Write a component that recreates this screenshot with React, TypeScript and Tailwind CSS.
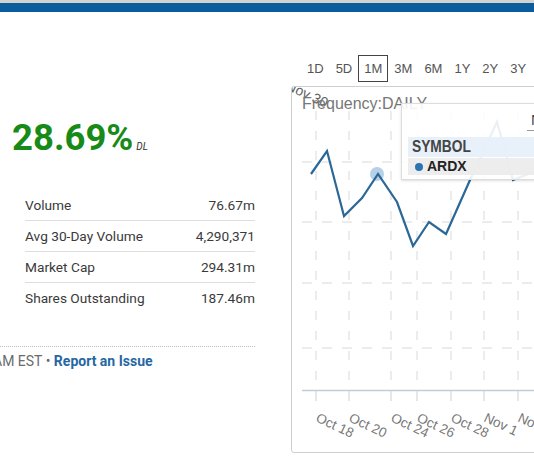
import React from "react";

const stats = [
  { label: "Volume", value: "76.67m" },
  { label: "Avg 30-Day Volume", value: "4,290,371" },
  { label: "Market Cap", value: "294.31m" },
  { label: "Shares Outstanding", value: "187.46m" },
];

const ranges = ["1D", "5D", "1M", "3M", "6M", "1Y", "2Y", "3Y"];

// x positions of the grid columns / ticks (page coordinates)
const ticks = [
  { x: 316, label: "Oct 18" },
  { x: 349, label: "Oct 20" },
  { x: 391, label: "Oct 24" },
  { x: 417, label: "Oct 26" },
  { x: 451, label: "Oct 28" },
  { x: 484, label: "Nov 1" },
  { x: 518, label: "Nov 3" },
  { x: 552, label: "Nov 7" },
];

const rows = [162, 222, 283, 348];

const points: [number, number][] = [
  [311, 174],
  [327, 151],
  [344, 216],
  [362, 198],
  [378, 174],
  [397, 202],
  [413, 246],
  [429, 222],
  [446, 234],
  [470, 180],
  [497, 122],
  [513, 180],
  [536, 171],
  [560, 160],
];

function PriceChart() {
  const path = points.map(([x, y], i) => `${i === 0 ? "M" : "L"}${x} ${y}`).join(" ");

  return (
    <svg
      className="absolute inset-0"
      width={298}
      height={365}
      viewBox="292 87 298 365"
      fontFamily="'Liberation Sans', Arial, sans-serif"
    >
      {/* previous label peeking in at the top */}
      <text x={285} y={89} fontSize={14} fill="#5f5f5f" transform="rotate(25 285 89)">
        Nov 30
      </text>

      {/* grid */}
      {ticks.map((t) => (
        <line key={t.x} x1={t.x} y1={111} x2={t.x} y2={390} stroke="#d9d9d9" strokeDasharray="9 11" />
      ))}
      {rows.map((y) => (
        <line key={y} x1={302} y1={y} x2={600} y2={y} stroke="#d9d9d9" strokeDasharray="10 10" />
      ))}

      {/* axis */}
      <line x1={302} y1={390.5} x2={600} y2={390.5} stroke="#c3ccd4" strokeWidth={1.5} />
      {ticks.map((t) => (
        <line key={t.x} x1={t.x} y1={391} x2={t.x} y2={401} stroke="#cfcfcf" />
      ))}
      {ticks.map((t) => (
        <text
          key={t.x}
          x={t.x - 1}
          y={421}
          fontSize={13.5}
          fill="#777"
          transform={`rotate(25 ${t.x - 1} 421)`}
        >
          {t.label}
        </text>
      ))}

      {/* series */}
      <circle cx={377} cy={174} r={7} fill="#b5d0e8" />
      <path d={path} fill="none" stroke="#2b6898" strokeWidth={2.2} strokeLinejoin="miter" />
    </svg>
  );
}

export default function App() {
  return (
    <div className="w-[534px] h-[462px] overflow-hidden bg-white">
      {/* Top bar */}
      <div className="h-[3px] bg-[#d2d2d2]" />
      <div className="h-[9px] bg-[#0b5c9d]" />

      <div className="flex">
        {/* Left column */}
        <div className="w-[256px] shrink-0 pt-[108px] font-['Roboto',sans-serif]">
          <div className="pl-[12px] h-[36px] leading-[36px] whitespace-nowrap">
            <span className="text-[36.5px] font-bold text-[#178a17]">28.69%</span>
            <span className="ml-[3px] text-[10px] italic text-[#333]">DL</span>
          </div>

          <div className="mt-[34px] ml-[25px] w-[230px]">
            {stats.map((s, i) => (
              <div
                key={s.label}
                className={
                  "h-[31px] flex items-center justify-between text-[13.7px] text-[#3a3a3a] " +
                  (i < stats.length - 1 ? "border-b border-[#dedede]" : "")
                }
              >
                <span>{s.label}</span>
                <span>{s.value}</span>
              </div>
            ))}
          </div>

          <div className="mt-[32px] w-[255px] border-t border-dotted border-[#bdbdbd]" />
          <div className="pt-[6px] -ml-[7px] text-[14px] leading-[16px] whitespace-nowrap">
            <span className="text-[#6b6b6b]">AM EST • </span>
            <span className="font-bold text-[#2667a3]">Report an Issue</span>
          </div>
        </div>

        {/* Right column */}
        <div className="ml-[35px] w-[300px] shrink-0 pt-[43px] font-['Liberation_Sans',Arial,sans-serif]">
          <div className="ml-[10px] flex">
            {ranges.map((r) => (
              <div
                key={r}
                className={
                  "h-[27px] px-[5px] flex items-center border text-[13px] text-[#555] " +
                  (r === "1M" ? "border-[#444]" : "border-transparent")
                }
              >
                {r}
              </div>
            ))}
          </div>

          <div className="relative mt-[4px] h-[367px] w-[300px] overflow-hidden rounded-[3px] border border-[#cfcfcf]">
            <PriceChart />

            <div className="absolute left-[10px] top-[8px] text-[16px] leading-[18px] text-[#777] whitespace-nowrap">
              Frequency:DAILY
            </div>

            {/* Tooltip */}
            <div className="absolute left-[109px] top-[16px] w-[200px] h-[77px] border border-[#dddddd] bg-white/90 shadow-sm">
              <div className="ml-[125px] h-[27px] border-b border-[#9a9a9a] pl-[4px] pt-[8px] text-[15px] leading-[16px] text-[#444] whitespace-nowrap">
                Nov 1
              </div>
              <div className="ml-[6px] mt-[6px] h-[20px] pl-[4px] flex items-center bg-[#e6effa]/90 text-[#444]">
                <span className="inline-block origin-left scale-x-[0.86] text-[16px] font-bold">SYMBOL</span>
              </div>
              <div className="ml-[6px] mt-[1px] h-[17px] flex items-center bg-[#ebebeb]/90 text-[14px] font-bold text-[#222]">
                <span className="ml-[7px] w-[8px] h-[8px] rounded-full bg-[#2a74b3]" />
                <span className="ml-[4px]">ARDX</span>
              </div>
            </div>
          </div>
        </div>
      </div>
    </div>
  );
}
